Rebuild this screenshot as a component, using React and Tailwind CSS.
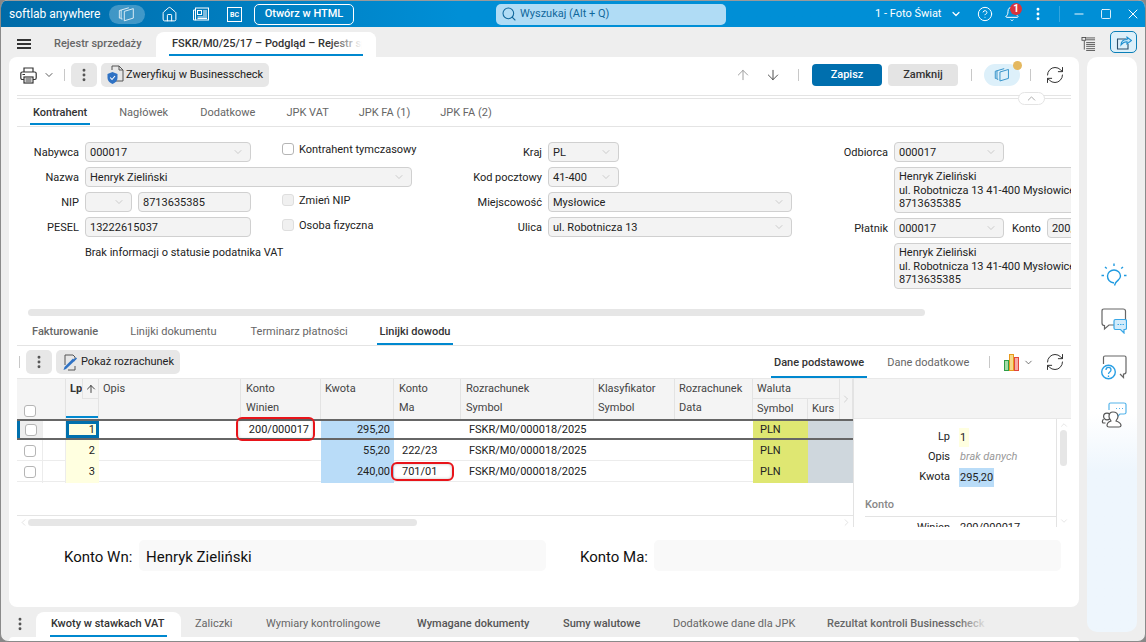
import React from 'react';
import { ChevronDown, ChevronUp, ChevronRight, ChevronLeft, ArrowUp, ArrowDown, EllipsisVertical, Search, Minus, Square, X, CircleHelp, Bell, RefreshCw, House } from 'lucide-react';

const Boxes = ({ className }) => (
  <svg className={className} viewBox="0 0 20 18" fill="none" stroke="currentColor" strokeWidth="1.1">
    <path d="M7 5.5 L17 2.5 V13 L7 16 Z" />
    <path d="M5 14 H3.5 V4 L12 1.5" />
    <path d="M3.5 4 L1.5 4.6 V13 H3" />
  </svg>
);

const Newspaper = () => (
  <svg className="w-[16px] h-[14px]" viewBox="0 0 16 14" fill="none" stroke="white" strokeWidth="1">
    <rect x="2.5" y="1" width="13" height="12" />
    <path d="M2.5 3 H0.5 V13 H2.5" />
    <rect x="4.5" y="3.5" width="4" height="4" />
    <path d="M10 4 H14 M10 6 H14 M10 8 H14 M4.5 10 H14 M4.5 11.5 H14" />
  </svg>
);

const BcIcon = () => (
  <div className="w-[15px] h-[15px] border border-white flex items-center justify-center text-[7px] font-bold text-white leading-none pt-[2px]">BC</div>
);

const Printer = () => (
  <svg className="w-[17px] h-[17px]" viewBox="0 0 17 17" fill="none" stroke="#333" strokeWidth="1.2">
    <path d="M4 5 V1 H13 V5" />
    <rect x="0.8" y="5" width="15.4" height="7.5" rx="1.5" />
    <rect x="4" y="10" width="9" height="6" fill="white" />
    <path d="M5.5 12 H11.5 M5.5 14 H11.5 M2.5 7.5 H5" />
  </svg>
);

const ShieldDoc = () => (
  <svg className="w-[17px] h-[20px]" viewBox="0 0 17 20" fill="none">
    <path d="M5 1 H12 L16 5 V16 H8" stroke="#555" strokeWidth="1" />
    <path d="M5 5 V1 M12 1 V5 H16" stroke="#555" strokeWidth="1" />
    <path d="M0.5 9 L5.5 7 L10.5 9 V13 C10.5 16 8 18 5.5 19 C3 18 0.5 16 0.5 13 Z" fill="#2f72c4" />
    <path d="M3.2 12.5 L5 14.5 L8 11" stroke="white" strokeWidth="1.1" />
  </svg>
);

const EditDoc = () => (
  <svg className="w-[17px] h-[17px]" viewBox="0 0 17 17" fill="none">
    <path d="M3 11 V1 H11 L13 3 V6 M13 12 V16 H6" stroke="#555" strokeWidth="1" />
    <path d="M4 15 L1.5 16 L2.5 13 L11 4.5 L13 6.5 Z" fill="#2f72c4" />
    <path d="M11.5 7 L14.5 4" stroke="#2f72c4" strokeWidth="1.6" />
  </svg>
);

const ListIcon = () => (
  <svg className="w-[15px] h-[14px]" viewBox="0 0 15 15" fill="none" stroke="#444" strokeWidth="0.9">
    <rect x="0.5" y="0.5" width="4" height="3" />
    <path d="M5 1 H14.5 M5 3 H14.5 M3 4 V13.5 M5 6 H14.5 M5 8 H14.5 M5 10 H14.5 M5 12.5 H14.5 M5 14.5 H14.5" />
  </svg>
);

const ShareIcon = () => (
  <svg className="w-[16px] h-[15px]" viewBox="0 0 16 15" fill="none" strokeWidth="1.1">
    <path d="M10 4 H1.5 V14 H12 V9" stroke="#2a4f6b" />
    <path d="M5 10 C5 6 8 4.5 11 4.5 V2 L15.5 5.5 L11 9 V6.8 C8.5 6.8 6.5 8 5 10 Z" stroke="#1d8fd0" fill="#bfe3f6" />
  </svg>
);

const BarsIcon = () => (
  <svg className="w-[16px] h-[17px]" viewBox="0 0 16 17" fill="none" strokeWidth="1">
    <rect x="0.5" y="6.5" width="4" height="10" fill="#a5dba8" stroke="#2e9e47" />
    <rect x="5.5" y="0.5" width="4" height="16" fill="#f5d98a" stroke="#e89a1c" />
    <rect x="10.5" y="3.5" width="4" height="13" fill="#f6aaa5" stroke="#e2463c" />
  </svg>
);

const Bulb = () => (
  <svg className="w-[26px] h-[24px]" viewBox="0 0 26 24" fill="none" stroke="#1f9ae0" strokeWidth="1.4">
    <path d="M13 20 C8 19 6.5 16 6.5 13 C6.5 9.5 9.5 7 13 7 C16.5 7 19.5 9.5 19.5 13 C19.5 16.5 16.5 17 14.5 20 L13.5 22.5" />
    <path d="M13 0.5 V3 M4 4 L5.8 5.6 M22 4 L20.2 5.6 M0.5 12.5 H3 M23 12.5 H25.5" />
  </svg>
);

const ChatDots = () => (
  <svg className="w-[26px] h-[26px]" viewBox="0 0 26 26" fill="none" strokeWidth="1.2">
    <path d="M17 17 H8 L3.5 21 V17.5 C1.5 17.5 1 16.5 1 15 V3 C1 1.5 1.5 1 3 1 H22 C23.5 1 24.5 1.5 24.5 3 V12" stroke="#666" />
    <path d="M13 13 C13 12 13.5 11.5 14.5 11.5 H24 C25 11.5 25.5 12 25.5 13 V20 C25.5 21 25 21.5 24 21.5 H23 V25 L19.5 21.5 H14.5 C13.5 21.5 13 21 13 20 Z" fill="#d4ecfb" stroke="#3aa7e6" />
    <path d="M16.5 16.5 H18 M19 16.5 H20.5 M21.5 16.5 H23" stroke="#3aa7e6" />
  </svg>
);

const ChatHelp = () => (
  <svg className="w-[26px] h-[26px]" viewBox="0 0 26 26" fill="none" strokeWidth="1.2">
    <path d="M2.5 9 V2.5 C2.5 1.5 3 1 4 1 H23.5 C24.5 1 25 1.5 25 2.5 V17 C25 18.5 24.5 19 22.5 19 V22.5 L19 19" stroke="#666" />
    <circle cx="7.5" cy="17" r="6.8" stroke="#2a9fe4" fill="white" strokeWidth="1.4" />
    <path d="M5 15 C5 11.5 10 11.5 10 15 C10 17 7.5 17 7.5 19 M7.5 20.5 V22" stroke="#2a9fe4" strokeWidth="1.3" />
  </svg>
);

const ChatPerson = () => (
  <svg className="w-[26px] h-[26px]" viewBox="0 0 26 26" fill="none" strokeWidth="1.2">
    <path d="M8 8 V2.5 C8 1.5 8.5 1 9.5 1 H23 C24 1 25 1.5 25 2.5 V10.5 C25 11.5 24 12 23 12 H19 L16 15 V12 H14" stroke="#55b4ea" />
    <path d="M15 6.5 H16 M18 6.5 H19 M21 6.5 H22" stroke="#55b4ea" />
    <circle cx="6" cy="14.5" r="3.4" stroke="#555" />
    <path d="M2.5 17 C1 19 1 20 2 21 H4.5" stroke="#555" />
    <path d="M12 10 C9 10 8 12 8 14.5 C8 17 10 18 10 19 C7 20 6 21 6 23.5 C6 24.5 7 25 8 25 H18 C19 25 20 24.5 20 23.5 C20 21 18 20 15 19 C15 18 17 17 17 14.5 C17 12 15 10 12 10 Z" fill="white" stroke="#555" />
  </svg>
);

const Select = ({ w, value }) => (
  <div className={`${w} h-[20px] shrink-0 flex items-center justify-between pl-[4px] pr-[6px] bg-[#f3f3f3] border border-[#d0d0d0] rounded-[4px] text-[#222]`}>
    <span className="pt-[2px]">{value}</span>
    <ChevronDown size={12} strokeWidth={1.2} className="text-[#b0b0b0]" />
  </div>
);

const Input = ({ w, value }) => (
  <div className={`${w} h-[20px] shrink-0 flex items-center pl-[4px] pt-[2px] bg-[#f3f3f3] border border-[#d0d0d0] rounded-[4px] text-[#222] whitespace-nowrap`}>{value}</div>
);

const Check = ({ disabled, className = '' }) => (
  <div className={`w-[12px] h-[12px] shrink-0 rounded-[3px] border ${disabled ? 'bg-[#f0f0f0] border-[#dedede]' : 'bg-white border-[#b5b5b5]'} ${className}`} />
);

const Row = ({ label, w, children }) => (
  <div className="h-[20px] flex items-center">
    <div className={`${w} shrink-0 text-right pr-[6px] pt-[2px] text-[#222]`}>{label}</div>
    {children}
  </div>
);

const AddressBox = () => (
  <div className="w-[190px] h-[46px] shrink-0 pl-[4px] pt-[2px] bg-[#f3f3f3] border border-[#d0d0d0] rounded-[4px] leading-[13.5px] text-[#222] whitespace-nowrap overflow-hidden">
    <div>Henryk Zieliński</div>
    <div>ul. Robotnicza 13 41-400 Mysłowice</div>
    <div>8713635385</div>
  </div>
);

const Sep = ({ className = '' }) => <div className={`w-px h-[12px] bg-[#c8c8c8] ${className}`} />;

const Tab = ({ label, active, className = '', bar = 'bottom-0' }) => (
  <div className={`relative h-full flex items-center whitespace-nowrap ${active ? 'font-medium text-[#333]' : 'text-[#666]'} ${className}`}>
    {label}
    {active && <div className={`absolute left-[-3px] right-[-3px] h-[2px] bg-[#0088cf] ${bar}`} />}
  </div>
);

const hc = 'border-r border-[#e3e3e3] text-[#444] leading-[19px]';

const HeaderCell = ({ top, bottom, className = 'pl-[4px]' }) => (
  <div className={`${hc} row-span-2 flex flex-col ${className}`}>
    <div className="h-[19px]">{top}</div>
    <div className="h-[19px]">{bottom}</div>
  </div>
);

const TableRow = ({ n, first, winien, kwota, ma }) => (
  <div className={`grid grid-cols-[26px_23px_33px_142px_80px_73px_67px_133px_81px_78px_55px_45px] h-[21px] text-[#222] ${first ? 'border-y-2 border-[#666] leading-[17px]' : 'border-b border-[#ececec] leading-[22px]'}`}>
    <div className={`flex items-center justify-center border-r border-[#ececec] ${first ? 'border-l-[3px] border-l-[#0070ad] bg-[#eeeeee]' : ''}`}><Check /></div>
    <div className="border-r border-[#ececec]" />
    <div className={`bg-[#ffffe0] text-right ${first ? 'border-[3px] border-[#0070ad] leading-[11px] pr-[1px]' : 'pr-[4px]'}`}>{n}</div>
    <div />
    <div className="text-right pr-[12px]">{winien}</div>
    <div className="bg-[#b9dcf8] text-right pr-[4px]">{kwota}</div>
    <div className="pl-[8px]">{ma}</div>
    <div className="pl-[8px]">FSKR/M0/000018/2025</div>
    <div />
    <div />
    <div className="bg-[#dfe772] pl-[7px]">PLN</div>
    <div className="bg-[#cfd7dd]" />
  </div>
);

const Highlight = ({ className }) => (
  <div className={`absolute rounded-[6px] border-2 border-[#e8141a] shadow-[inset_0_0_3px_rgba(0,0,0,0.25)] ${className}`} />
);

export default function App() {
  return (
    <div className="w-[1146px] h-[642px] overflow-hidden bg-[#888888] font-['Roboto',sans-serif] text-[11px]">
      <div className="w-full h-full flex flex-col overflow-hidden rounded-[8px] bg-[#eeeeee] border-l border-b border-[#8a8a8a] border-r">
        {/* Title bar */}
        <div className="h-[27px] shrink-0 flex items-center bg-gradient-to-r from-[#006ba8] via-[#008fd6] via-40% to-[#008fd6] text-white border-t border-[#9a9a9a]">
          <span className="ml-[8px] text-[12px] w-[92px] whitespace-nowrap">softlab anywhere</span>
          <div className="ml-[8px] w-[36px] h-[19px] rounded-full bg-white/25 flex items-center justify-center"><Boxes className="w-[18px] h-[17px] text-white/80" /></div>
          <House size={17} strokeWidth={1.4} className="ml-[16px]" />
          <div className="ml-[15px]"><Newspaper /></div>
          <div className="ml-[18px]"><BcIcon /></div>
          <div className="ml-[12px] w-[100px] h-[21px] border border-white rounded-[5px] flex items-center justify-center font-medium">Otwórz w HTML</div>
          <div className="ml-[142px] w-[230px] h-[21px] rounded-[5px] bg-[#b0dcf5] flex items-center text-[#10689c] pl-[5px]">
            <Search size={16} strokeWidth={1.6} />
            <span className="ml-[3px]">Wyszukaj (Alt + Q)</span>
          </div>
          <span className="ml-[149px] whitespace-nowrap w-[68px]">1 - Foto Świat</span>
          <ChevronDown size={12} strokeWidth={2.4} className="ml-[7px]" />
          <CircleHelp size={16} strokeWidth={1.5} className="ml-[15px]" />
          <div className="relative ml-[11px]">
            <Bell size={16} strokeWidth={1.5} />
            <div className="absolute top-[-3px] right-[-2px] w-[12px] h-[12px] rounded-full bg-[#d8343b] text-[10px] font-bold leading-[12px] text-center">1</div>
          </div>
          <EllipsisVertical size={16} strokeWidth={2.4} className="ml-[10px]" />
          <div className="ml-[13px] w-px h-[16px] bg-white/20" />
          <Minus size={14} strokeWidth={1.6} className="ml-[12px]" />
          <Square size={12} strokeWidth={1.7} className="ml-[14px]" />
          <X size={16} strokeWidth={1.5} className="ml-[13px]" />
        </div>

        {/* Open documents tabs */}
        <div className="h-[30px] shrink-0 flex items-end">
          <div className="w-[14px] h-[10px] ml-[16px] mb-[8px] flex flex-col justify-between">
            <div className="h-[2px] bg-[#333]" /><div className="h-[2px] bg-[#333]" /><div className="h-[2px] bg-[#333]" />
          </div>
          <span className="ml-[23px] mb-[5px] w-[89px] font-medium text-[#666] whitespace-nowrap">Rejestr sprzedaży</span>
          <div className="relative ml-[13px] w-[220px] h-[25px] bg-white rounded-t-[8px] pl-[16px] pt-[4px] font-medium text-[#333] whitespace-nowrap overflow-hidden">
            FSKR/M0/25/17 – Podgląd – Rejestr sprzedaży
            <div className="absolute top-0 right-0 w-[46px] h-full bg-gradient-to-r from-white/0 to-white to-[70%]" />
            <div className="absolute left-[13px] w-[194px] bottom-[1px] h-[2px] bg-[#0088cf]" />
          </div>
          <div className="ml-[705px] mb-[4px] w-[15px] h-[19px] flex items-center"><ListIcon /></div>
          <div className="ml-[14px] mb-[4px] w-[27px] h-[22px] rounded-[5px] border border-[#0a7fb8] bg-[#dcf0fa] flex items-center justify-center"><ShareIcon /></div>
        </div>

        {/* Content */}
        <div className="flex-1 min-h-0 flex items-start">
          <div className="w-[1078px] shrink-0 h-full flex flex-col">
            <div className="relative ml-[8px] w-[1070px] h-[550px] shrink-0 bg-white rounded-[8px] px-[8px] flex flex-col">
              {/* Toolbar */}
              <div className="h-[38px] shrink-0 pb-[2px] flex items-center">
                <div className="ml-[3px]"><Printer /></div>
                <ChevronDown size={12} strokeWidth={1.6} className="ml-[6px] text-[#333]" />
                <Sep className="ml-[9px]" />
                <div className="ml-[6px] w-[26px] h-[24px] rounded-[5px] bg-[#e7e7e7] flex items-center justify-center"><EllipsisVertical size={16} strokeWidth={2.4} className="text-[#555]" /></div>
                <div className="ml-[4px] w-[168px] h-[24px] rounded-[5px] bg-[#e7e7e7] flex items-center pl-[6px] gap-[2px] text-[#222] whitespace-nowrap"><ShieldDoc />Zweryfikuj w Businesscheck</div>
                <ArrowUp size={16} strokeWidth={1.4} className="ml-[466px] text-[#999]" />
                <ArrowDown size={16} strokeWidth={1.4} className="ml-[14px] text-[#444]" />
                <Sep className="ml-[17px]" />
                <div className="ml-[13px] w-[70px] h-[22px] rounded-[4px] bg-[#006fae] text-white font-medium flex items-center justify-center">Zapisz</div>
                <div className="ml-[6px] w-[70px] h-[22px] rounded-[4px] bg-[#e4e4e4] text-[#333] font-medium flex items-center justify-center">Zamknij</div>
                <Sep className="ml-[13px]" />
                <div className="relative ml-[12px] w-[36px] h-[22px] rounded-full bg-[#ddf0fa] flex items-center justify-center">
                  <Boxes className="w-[17px] h-[16px] text-[#2d8fc7]" />
                  <div className="absolute top-[-3px] right-[-2px] w-[9px] h-[9px] rounded-full bg-[#e4b860]" />
                </div>
                <Sep className="ml-[10px]" />
                <RefreshCw size={20} strokeWidth={1.2} className="ml-[14px] text-[#333]" />
              </div>
              <div className="relative shrink-0 h-[2px] border-y border-[#e4e4e4] box-content">
                <div className="absolute top-[-4px] right-[26px] w-[27px] h-[13px] rounded-full bg-white border border-[#e4e4e4] flex items-center justify-center"><ChevronUp size={13} strokeWidth={1.8} className="text-[#aaa]" /></div>
              </div>

              {/* Contractor tabs */}
              <div className="h-[28px] shrink-0 flex border-b border-[#e4e4e4]">
                <Tab label="Kontrahent" active bar="bottom-[1px]" className="ml-[16px] pt-[2px]" />
                <Tab label="Nagłówek" className="ml-[32px] pt-[2px]" />
                <Tab label="Dodatkowe" className="ml-[32px] pt-[2px]" />
                <Tab label="JPK VAT" className="ml-[31px] pt-[2px]" />
                <Tab label="JPK FA (1)" className="ml-[30px] pt-[2px]" />
                <Tab label="JPK FA (2)" className="ml-[30px] pt-[2px]" />
              </div>

              {/* Contractor form */}
              <div className="h-[182px] shrink-0 pt-[15px] flex overflow-hidden">
                <div className="w-[423px] shrink-0 flex flex-col gap-[5px]">
                  <Row label="Nabywca" w="w-[68px]">
                    <Select w="w-[166px]" value="000017" />
                    <Check className="ml-[31px] mt-[-6px]" />
                    <span className="ml-[5px] mt-[-4px] whitespace-nowrap text-[#222]">Kontrahent tymczasowy</span>
                  </Row>
                  <Row label="Nazwa" w="w-[68px]"><Select w="w-[327px]" value="Henryk Zieliński" /></Row>
                  <Row label="NIP" w="w-[68px]">
                    <Select w="w-[47px]" value="" />
                    <Input w="w-[113px] ml-[6px]" value="8713635385" />
                    <Check disabled className="ml-[31px] mt-[-4px]" />
                    <span className="ml-[5px] mt-[-2px] text-[#222]">Zmień NIP</span>
                  </Row>
                  <Row label="PESEL" w="w-[68px]">
                    <Input w="w-[166px]" value="13222615037" />
                    <Check disabled className="ml-[31px] mt-[-4px]" />
                    <span className="ml-[5px] mt-[-2px] text-[#222]">Osoba fizyczna</span>
                  </Row>
                  <div className="ml-[68px] text-[#222] h-[20px] leading-[22px]">Brak informacji o statusie podatnika VAT</div>
                </div>
                <div className="w-[390px] shrink-0 flex flex-col gap-[5px]">
                  <Row label="Kraj" w="w-[108px]"><Select w="w-[71px]" value="PL" /></Row>
                  <Row label="Kod pocztowy" w="w-[108px]"><Select w="w-[71px]" value="41-400" /></Row>
                  <Row label="Miejscowość" w="w-[108px]"><Select w="w-[244px]" value="Mysłowice" /></Row>
                  <Row label="Ulica" w="w-[108px]"><Select w="w-[244px]" value="ul. Robotnicza 13" /></Row>
                </div>
                <div className="flex-1 min-w-0 flex flex-col gap-[5px]">
                  <Row label="Odbiorca" w="w-[64px]"><Select w="w-[110px]" value="000017" /></Row>
                  <div className="ml-[64px]"><AddressBox /></div>
                  <Row label="Płatnik" w="w-[64px]">
                    <Select w="w-[110px]" value="000017" />
                    <span className="ml-[8px] mr-[6px] pt-[2px] text-[#222]">Konto</span>
                    <Input w="w-[60px]" value="200/000017" />
                  </Row>
                  <div className="ml-[64px]"><AddressBox /></div>
                </div>
              </div>
              <div className="h-[7px] shrink-0 ml-[11px] w-[897px] rounded-full bg-[#e6e6e6]" />

              {/* Document tabs */}
              <div className="h-[30px] shrink-0 flex border-b border-[#e4e4e4]">
                <Tab label="Fakturowanie" className="ml-[15px] pt-[4px] font-medium" />
                <Tab label="Linijki dokumentu" className="ml-[32px] pt-[4px]" />
                <Tab label="Terminarz płatności" className="ml-[34px] pt-[4px]" />
                <Tab label="Linijki dowodu" active className="ml-[32px] pt-[4px]" />
              </div>

              {/* Grid toolbar */}
              <div className="h-[32px] shrink-0 flex items-center">
                <Sep className="ml-[2px]" />
                <div className="ml-[6px] w-[26px] h-[24px] rounded-[5px] bg-[#e7e7e7] flex items-center justify-center"><EllipsisVertical size={16} strokeWidth={2.4} className="text-[#555]" /></div>
                <div className="ml-[4px] w-[124px] h-[24px] rounded-[5px] bg-[#e7e7e7] flex items-center pl-[6px] gap-[2px] text-[#222] whitespace-nowrap"><EditDoc />Pokaż rozrachunek</div>
                <Tab label="Dane podstawowe" active className="ml-[594px] h-[27px] self-start pt-[3px]" />
                <Tab label="Dane dodatkowe" className="ml-[23px] h-[27px] self-start pt-[3px]" />
                <Sep className="ml-[20px]" />
                <div className="ml-[14px]"><BarsIcon /></div>
                <ChevronDown size={11} strokeWidth={1.6} className="ml-[3px] text-[#444]" />
                <RefreshCw size={20} strokeWidth={1.2} className="ml-[11px] text-[#333]" />
              </div>

              {/* Grid */}
              <div className="relative h-[149px] shrink-0 flex overflow-hidden">
                <div className="w-[836px] shrink-0 flex flex-col">
                  <div className="h-[41px] shrink-0 grid grid-cols-[26px_23px_33px_142px_80px_73px_67px_133px_81px_78px_55px_32px_13px] grid-rows-[20px_20px] bg-[#f4f4f4] border-t border-[#e8e8e8]">
                    <div className="row-span-2 col-span-2 border-r border-[#e3e3e3] flex items-end pb-[2px] pl-[7px]"><Check /></div>
                    <div className="row-span-2 relative border-r border-[#e3e3e3] pl-[4px] font-bold text-[#333] leading-[19px]">
                      Lp
                      <div className="absolute top-0 left-[16px] right-0 h-[20px] border-l border-b border-[#e3e3e3] flex items-center justify-center"><ArrowUp size={12} strokeWidth={1.8} className="text-[#333]" /></div>
                      <div className="absolute left-0 right-0 bottom-[1px] h-[2px] bg-[#0088cf]" />
                    </div>
                    <HeaderCell top="Opis" />
                    <HeaderCell top="Konto" bottom="Winien" className="pl-[5px]" />
                    <HeaderCell top="Kwota" />
                    <HeaderCell top="Konto" bottom="Ma" className="pl-[5px]" />
                    <HeaderCell top="Rozrachunek" bottom="Symbol" className="pl-[5px]" />
                    <HeaderCell top="Klasyfikator" bottom="Symbol" />
                    <HeaderCell top="Rozrachunek" bottom="Data" />
                    <div className={`${hc} col-span-2 border-b pl-[4px]`}>Waluta</div>
                    <div className="row-span-2 flex items-center justify-center border-r border-[#e3e3e3]"><ChevronRight size={14} strokeWidth={1.2} className="text-[#bbb]" /></div>
                    <div className={`${hc} pl-[4px]`}>Symbol</div>
                    <div className={`${hc} pl-[4px]`}>Kurs</div>
                  </div>
                  <TableRow n="1" first winien="200/000017" kwota="295,20" />
                  <TableRow n="2" kwota="55,20" ma="222/23" />
                  <TableRow n="3" kwota="240,00" ma="701/01" />
                  <div className="flex-1" />
                  <div className="relative h-[12px] shrink-0 border-t border-[#e4e4e4]">
                    <div className="absolute left-[11px] top-[3px] w-[389px] h-[7px] rounded-full bg-[#e6e6e6]" />
                    <ChevronLeft size={11} strokeWidth={1.2} className="absolute left-[1px] top-[1px] text-[#ccc]" />
                    <ChevronRight size={11} strokeWidth={1.2} className="absolute right-[1px] top-[1px] text-[#ccc]" />
                  </div>
                </div>

                {/* Detail panel */}
                <div className="flex-1 min-w-0 flex flex-col border-l border-[#e3e3e3]">
                  <div className="h-[41px] shrink-0 bg-[#f4f4f4] border-t border-b border-[#e8e8e8]" />
                  <div className="flex-1 min-h-0 flex overflow-hidden">
                    <div className="w-[203px] shrink-0 border-r border-[#e3e3e3] text-[#222]">
                      <div className="flex items-center h-[20px] mt-[8px]"><span className="w-[96px] text-right">Lp</span><span className="ml-[9px] px-[1px] bg-[#ffffe0] w-[10px] h-[19px] leading-[19px]">1</span></div>
                      <div className="flex items-center h-[20px]"><span className="w-[96px] text-right">Opis</span><span className="ml-[10px] italic text-[#999]">brak danych</span></div>
                      <div className="flex items-center h-[20px]"><span className="w-[96px] text-right">Kwota</span><span className="ml-[9px] px-[1px] bg-[#b9dcf8] h-[19px] leading-[19px]">295,20</span></div>
                      <div className="ml-[11px] mt-[10px] h-[20px] leading-[16px] text-[#888] font-medium border-b border-[#e3e3e3]">Konto</div>
                      <div className="flex items-center h-[20px] mt-[1px]"><span className="w-[96px] text-right">Winien</span><span className="ml-[10px]">200/000017</span></div>
                    </div>
                    <div className="relative flex-1">
                      <div className="absolute top-[11px] left-[3px] w-[7px] h-[36px] rounded-full bg-[#e6e6e6]" />
                      <ChevronUp size={10} strokeWidth={1.2} className="absolute top-[1px] left-[2px] text-[#ccc]" />
                      <ChevronDown size={10} strokeWidth={1.2} className="absolute bottom-[1px] left-[2px] text-[#ccc]" />
                    </div>
                  </div>
                </div>
                <Highlight className="left-[219px] top-[39px] w-[79px] h-[24px]" />
                <Highlight className="left-[374px] top-[84px] w-[63px] h-[19px]" />
              </div>

              {/* Account names */}
              <div className="h-[31px] mt-[13px] shrink-0 flex items-center text-[15px] text-[#111] whitespace-nowrap">
                <span className="ml-[47px] w-[68px] pt-[4px]">Konto Wn:</span>
                <div className="ml-[7px] w-[407px] h-full rounded-[5px] bg-[#f9f9f9] flex items-center pl-[7px] pt-[4px]">Henryk Zieliński</div>
                <span className="ml-[34px] w-[68px] pt-[4px]">Konto Ma:</span>
                <div className="ml-[6px] w-[407px] h-full rounded-[5px] bg-[#f9f9f9]" />
              </div>
            </div>

            {/* Bottom tabs */}
            <div className="h-[30px] shrink-0 flex items-end">
              <EllipsisVertical size={16} strokeWidth={2.4} className="ml-[11px] mb-[5px] text-[#555]" />
              <div className="relative ml-[8px] w-[145px] h-[25px] bg-white rounded-t-[8px] pl-[15px] pb-[1px] flex items-center font-medium text-[#333] whitespace-nowrap">
                Kwoty w stawkach VAT
                <div className="absolute left-[14px] w-[117px] bottom-0 h-[2px] bg-[#0088cf]" />
              </div>
              <span className="ml-[14px] mb-[5px] w-[38px] text-[#666]">Zaliczki</span>
              <span className="ml-[33px] mb-[5px] w-[115px] whitespace-nowrap text-[#666]">Wymiary kontrolingowe</span>
              <span className="ml-[36px] mb-[5px] w-[114px] whitespace-nowrap font-medium text-[#555]">Wymagane dokumenty</span>
              <span className="ml-[32px] mb-[5px] w-[79px] whitespace-nowrap font-medium text-[#555]">Sumy walutowe</span>
              <span className="ml-[31px] mb-[5px] w-[123px] whitespace-nowrap text-[#666]">Dodatkowe dane dla JPK</span>
              <span className="relative ml-[31px] mb-[5px] w-[161px] whitespace-nowrap overflow-hidden font-medium text-[#666]">
                Rezultat kontroli Businesscheck
                <div className="absolute top-0 right-0 w-[30px] h-full bg-gradient-to-r from-[#eeeeee]/0 to-[#eeeeee]" />
              </span>
            </div>
            <div className="ml-[8px] w-[1070px] flex-1 bg-white rounded-t-[6px]" />
          </div>

          {/* Assistant rail */}
          <div className="ml-[8px] w-[50px] h-[575px] shrink-0 rounded-[10px] bg-gradient-to-b from-white from-[62%] to-[#eef6fd] to-[72%] flex flex-col items-center pl-[3px] pt-[206px] gap-[21px]">
            <Bulb />
            <ChatDots />
            <ChatHelp />
            <ChatPerson />
          </div>
        </div>
      </div>
    </div>
  );
}
